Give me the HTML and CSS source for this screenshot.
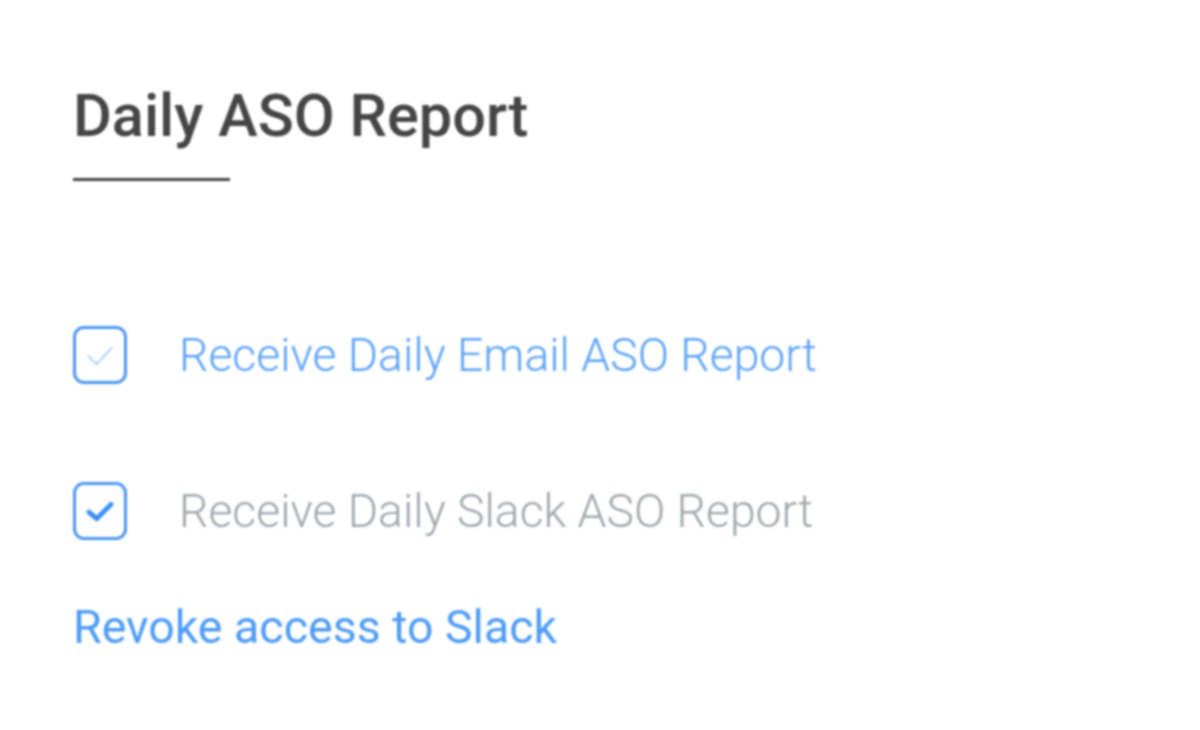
FILE: index.html
```html
<!DOCTYPE html>
<html lang="en">
<head>
  <meta charset="UTF-8" />
  <title>Daily ASO Report</title>
  <link rel="stylesheet" href="styles.css">
</head>
<body>

<section class="report">
  <h2 class="report-title">Daily ASO Report</h2>
  <div class="title-rule"></div>

  <label class="option option-email">
    <span class="box">
      <svg viewBox="0 0 20 20" width="46" height="46"><path d="M5 10.5 L8.5 14 L15 7" fill="none" stroke="currentColor" stroke-width="0.9" stroke-linecap="round" stroke-linejoin="round"/></svg>
    </span>
    <span class="option-text">Receive Daily Email ASO Report</span>
  </label>

  <label class="option option-slack">
    <span class="box">
      <svg viewBox="0 0 20 20" width="44" height="44"><path d="M5 10.5 L8.5 13.5 L15 7" fill="none" stroke="currentColor" stroke-width="2.2" stroke-linecap="round" stroke-linejoin="round"/></svg>
    </span>
    <span class="option-text">Receive Daily Slack ASO Report</span>
  </label>

  <a class="revoke" href="#">Revoke access to Slack</a>
</section>

</body>
</html>
```

FILE: styles.css
```css
body {
  margin: 0;
  background: #fff;
  font-family: Roboto, "Liberation Sans", sans-serif;
}
.report {
  padding: 78px 0 0 73px;
  filter: blur(1px);
}
.report-title {
  margin: 0;
  font-size: 59.5px;
  font-weight: 500;
  color: #454545;
  line-height: 76px;
}
.title-rule {
  width: 157px;
  height: 3px;
  background: #444;
  margin-top: 24px;
  margin-bottom: 145px;
}
.option {
  display: flex;
  align-items: center;
  gap: 52px;
  height: 58px;
  margin-bottom: 98px;
}
.box {
  width: 48px;
  height: 52px;
  border: 3px solid #4b95f3;
  border-radius: 11px;
  display: flex;
  align-items: center;
  justify-content: center;
  color: #3d8ef3;
}
.option-email .box svg {
  color: #b4d2f8;
}
.option-text {
  font-size: 46.3px;
  font-weight: 300;
}
.option-email .option-text {
  color: #5aa2f6;
}
.option-slack {
  margin-bottom: 60px;
}
.option-slack .option-text {
  color: #9fa6ad;
}
.revoke {
  display: block;
  font-size: 46.5px;
  color: #4d9bf5;
  text-decoration: none;
}
```
